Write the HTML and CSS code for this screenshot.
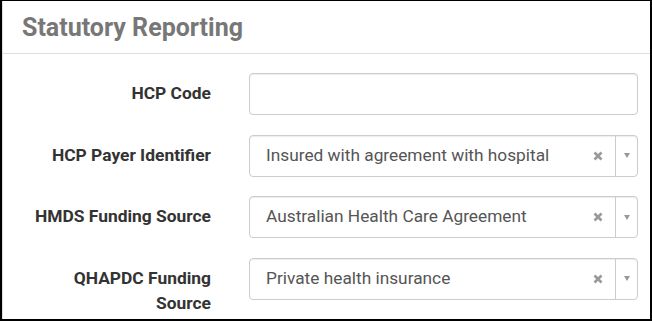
FILE: index.html
```html
<!DOCTYPE html>
<html>

<head>
    <link rel="stylesheet" href="styles.css">
</head>

<body>
    <div class="frame">
        <div class="panel">
            <div class="panel-heading">
                <h3 class="panel-title">Statutory Reporting</h3>
            </div>
            <div class="panel-body">
                <div class="form-row">
                    <label class="form-label">HCP Code</label>
                    <div class="form-control"></div>
                </div>
                <div class="form-row">
                    <label class="form-label">HCP Payer Identifier</label>
                    <div class="form-control select">
                        <span class="select-value">Insured with agreement with hospital</span>
                        <svg class="select-clear" viewBox="0 0 10 10"><path d="M1.5 1.5L8.5 8.5M8.5 1.5L1.5 8.5" /></svg>
                        <span class="select-arrow"></span>
                    </div>
                </div>
                <div class="form-row">
                    <label class="form-label">HMDS Funding Source</label>
                    <div class="form-control select">
                        <span class="select-value">Australian Health Care Agreement</span>
                        <svg class="select-clear" viewBox="0 0 10 10"><path d="M1.5 1.5L8.5 8.5M8.5 1.5L1.5 8.5" /></svg>
                        <span class="select-arrow"></span>
                    </div>
                </div>
                <div class="form-row">
                    <label class="form-label">QHAPDC Funding<br>Source</label>
                    <div class="form-control select">
                        <span class="select-value">Private health insurance</span>
                        <svg class="select-clear" viewBox="0 0 10 10"><path d="M1.5 1.5L8.5 8.5M8.5 1.5L1.5 8.5" /></svg>
                        <span class="select-arrow"></span>
                    </div>
                </div>
            </div>
        </div>
    </div>
</body>

</html>
```

FILE: styles.css
```css
body {
    margin: 0;
    font-family: Roboto, "Liberation Sans", sans-serif;
    background: #fff;
}

.frame {
    width: 652px;
    height: 321px;
    box-sizing: border-box;
    border: 2px solid #000;
    border-top-width: 1px;
    overflow: hidden;
}

.panel {
    height: 100%;
    border-left: 1px solid #ddd;
}

.panel-heading {
    height: 52px;
    border-bottom: 1px solid #ddd;
    padding-left: 19px;
    display: flex;
    align-items: center;
}

.panel-title {
    margin: 0;
    font-size: 25px;
    font-weight: bold;
    color: #777;
}

.panel-body {
    padding-top: 19px;
    display: flex;
    flex-direction: column;
    gap: 19.5px;
}

.form-row {
    display: grid;
    grid-template-columns: 208px 389px;
    column-gap: 38px;
    align-items: start;
}

.form-label {
    text-align: right;
    font-size: 17.4px;
    font-weight: bold;
    color: #333;
    line-height: 25px;
    padding-top: 8px;
}

.form-control {
    height: 42px;
    box-sizing: border-box;
    border: 1px solid #ccc;
    border-radius: 4px;
    box-shadow: inset 0 1px 1px rgba(0, 0, 0, .075);
}

.select {
    display: flex;
    align-items: center;
    font-size: 17.3px;
    color: #555;
}

.select-value {
    flex: 1;
    padding-left: 16px;
    margin-top: -2px;
}

.select-clear {
    width: 10px;
    height: 10px;
    margin-right: 12px;
    stroke: #999;
    stroke-width: 2.6;
    fill: none;
}

.select-arrow {
    align-self: stretch;
    width: 21px;
    border-left: 1px solid #ccc;
    display: flex;
    align-items: center;
    justify-content: center;
}

.select-arrow::after {
    content: "";
    border-top: 5px solid #999;
    border-left: 3.5px solid transparent;
    border-right: 3.5px solid transparent;
}
```
